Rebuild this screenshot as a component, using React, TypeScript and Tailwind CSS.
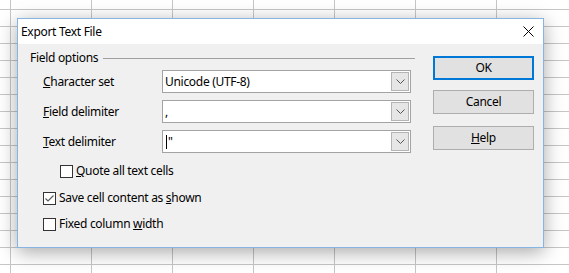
import React from "react";

const font = { fontFamily: '"Noto Sans", "Open Sans", sans-serif', letterSpacing: "-0.3px" };

function Chevron() {
  return (
    <svg width="9" height="5" viewBox="0 0 9 5" className="block">
      <path d="M0.5 0.5 L4.5 4.5 L8.5 0.5" fill="none" stroke="#555" strokeWidth="1" />
    </svg>
  );
}

function Combo({ children }: { children: React.ReactNode }) {
  return (
    <div className="flex h-[23px] w-[249px] items-center border border-[#a3a3a3] bg-white pl-[2px] pr-[1px]">
      <div className="flex-1 flex items-center text-[12px] text-black">{children}</div>
      <div className="flex h-[19px] w-[18px] items-center justify-center border border-[#b4b4b4] bg-[#e6e6e6]">
        <Chevron />
      </div>
    </div>
  );
}

function Check({ checked }: { checked?: boolean }) {
  return (
    <div className="flex h-[13px] w-[13px] items-center justify-center border border-[#333] bg-white">
      {checked && (
        <svg width="11" height="11" viewBox="0 0 11 11" className="block">
          <path d="M1.5 5.5 L4 8 L9.5 2.5" fill="none" stroke="#5a5a5a" strokeWidth="1.2" />
        </svg>
      )}
    </div>
  );
}

function Btn({ children, primary }: { children: React.ReactNode; primary?: boolean }) {
  return (
    <div
      className={
        "flex h-[24px] w-[101px] items-center justify-center bg-[#e1e1e1] text-[12px] text-black " +
        (primary ? "border-2 border-[#0078d7]" : "border border-[#adadad]")
      }
    >
      {children}
    </div>
  );
}

export default function App() {
  const cols = [10, 80, 80, 80, 80, 80, 80, 80];
  const rows = [9, ...Array.from({ length: 16 }, () => 16)];
  return (
    <div className="relative h-[273px] w-[569px] overflow-hidden bg-white" style={font}>
      <div className="flex flex-col">
        {rows.map((h, ri) => (
          <div key={ri} className="flex border-b border-[#c6c6c6]" style={{ height: h + 1 }}>
            {cols.map((w, ci) => (
              <div key={ci} className="shrink-0 border-r border-[#c6c6c6]" style={{ width: w + 1 }} />
            ))}
          </div>
        ))}
      </div>

      <div className="absolute left-[17px] top-[18px] flex h-[230px] w-[527px] flex-col border border-[#86b5e4] shadow-[0_4px_18px_rgba(0,0,0,0.35)]">
        <div className="flex h-[25px] items-center justify-between bg-white pl-[3px] pr-[9px]">
          <span className="text-[12px] text-black">Export Text File</span>
          <svg width="11" height="11" viewBox="0 0 11 11" className="block">
            <path d="M0.5 0.5 L10.5 10.5 M10.5 0.5 L0.5 10.5" stroke="#000" strokeWidth="1" />
          </svg>
        </div>
        <div className="flex flex-1 bg-[#f0f0f0] pl-[12px]">
          <div className="flex w-[385px] flex-col pt-[6px]">
            <div className="flex h-[16px] items-center">
              <span className="text-[12px] text-black">Field options</span>
              <div className="ml-[5px] h-px flex-1 bg-[#a0a0a0]" />
            </div>
            <div className="mt-[4px] flex flex-col gap-[7px] pl-[13px]">
              <div className="flex items-center">
                <span className="w-[119px] text-[12px] text-black"><u>C</u>haracter set</span>
                <Combo>Unicode (UTF-8)</Combo>
              </div>
              <div className="flex items-center">
                <span className="w-[119px] text-[12px] text-black"><u>F</u>ield delimiter</span>
                <Combo>,</Combo>
              </div>
              <div className="flex items-center">
                <span className="w-[119px] text-[12px] text-black"><u>T</u>ext delimiter</span>
                <Combo>
                  <span className="ml-[1px] h-[14px] w-px bg-black" />
                  <span className="ml-[1px]">"</span>
                </Combo>
              </div>
            </div>
            <div className="mt-[10px] flex flex-col pl-[13px] text-[12px] text-black">
              <div className="flex h-[16px] items-center gap-[3px] pl-[17px]">
                <Check />
                <span><u>Q</u>uote all text cells</span>
              </div>
              <div className="mt-[11px] flex h-[16px] items-center gap-[3px]">
                <Check checked />
                <span>Save cell content as <u>s</u>hown</span>
              </div>
              <div className="mt-[10px] flex h-[16px] items-center gap-[3px]">
                <Check />
                <span>Fixed column <u>w</u>idth</span>
              </div>
            </div>
          </div>
          <div className="ml-[18px] flex flex-col pt-[12px]">
            <Btn primary>OK</Btn>
            <div className="mt-[10px]">
              <Btn>Cancel</Btn>
            </div>
            <div className="mt-[12px]">
              <Btn><span><u>H</u>elp</span></Btn>
            </div>
          </div>
        </div>
      </div>
    </div>
  );
}
